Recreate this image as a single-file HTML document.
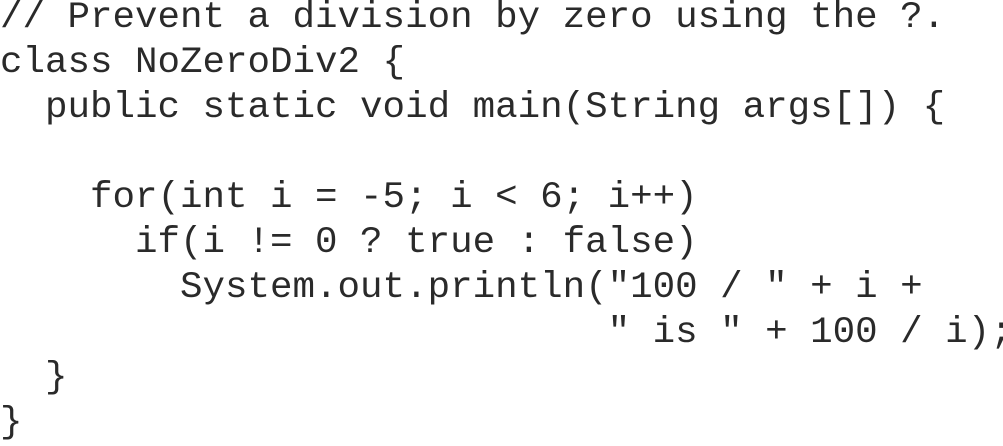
<!DOCTYPE html>
<html><head><style>
html,body{margin:0;padding:0;background:#fff;width:1003px;height:440px;overflow:hidden}
pre{position:absolute;left:0;top:-4px;margin:0;font-family:"Liberation Mono",monospace;font-size:37.5px;line-height:45px;color:#2a2a2a}
</style></head><body><pre>// Prevent a division by zero using the ?.
class NoZeroDiv2 {
  public static void main(String args[]) {

    for(int i = -5; i &lt; 6; i++)
      if(i != 0 ? true : false)
        System.out.println("100 / " + i +
                           " is " + 100 / i);
  }
}</pre></body></html>
